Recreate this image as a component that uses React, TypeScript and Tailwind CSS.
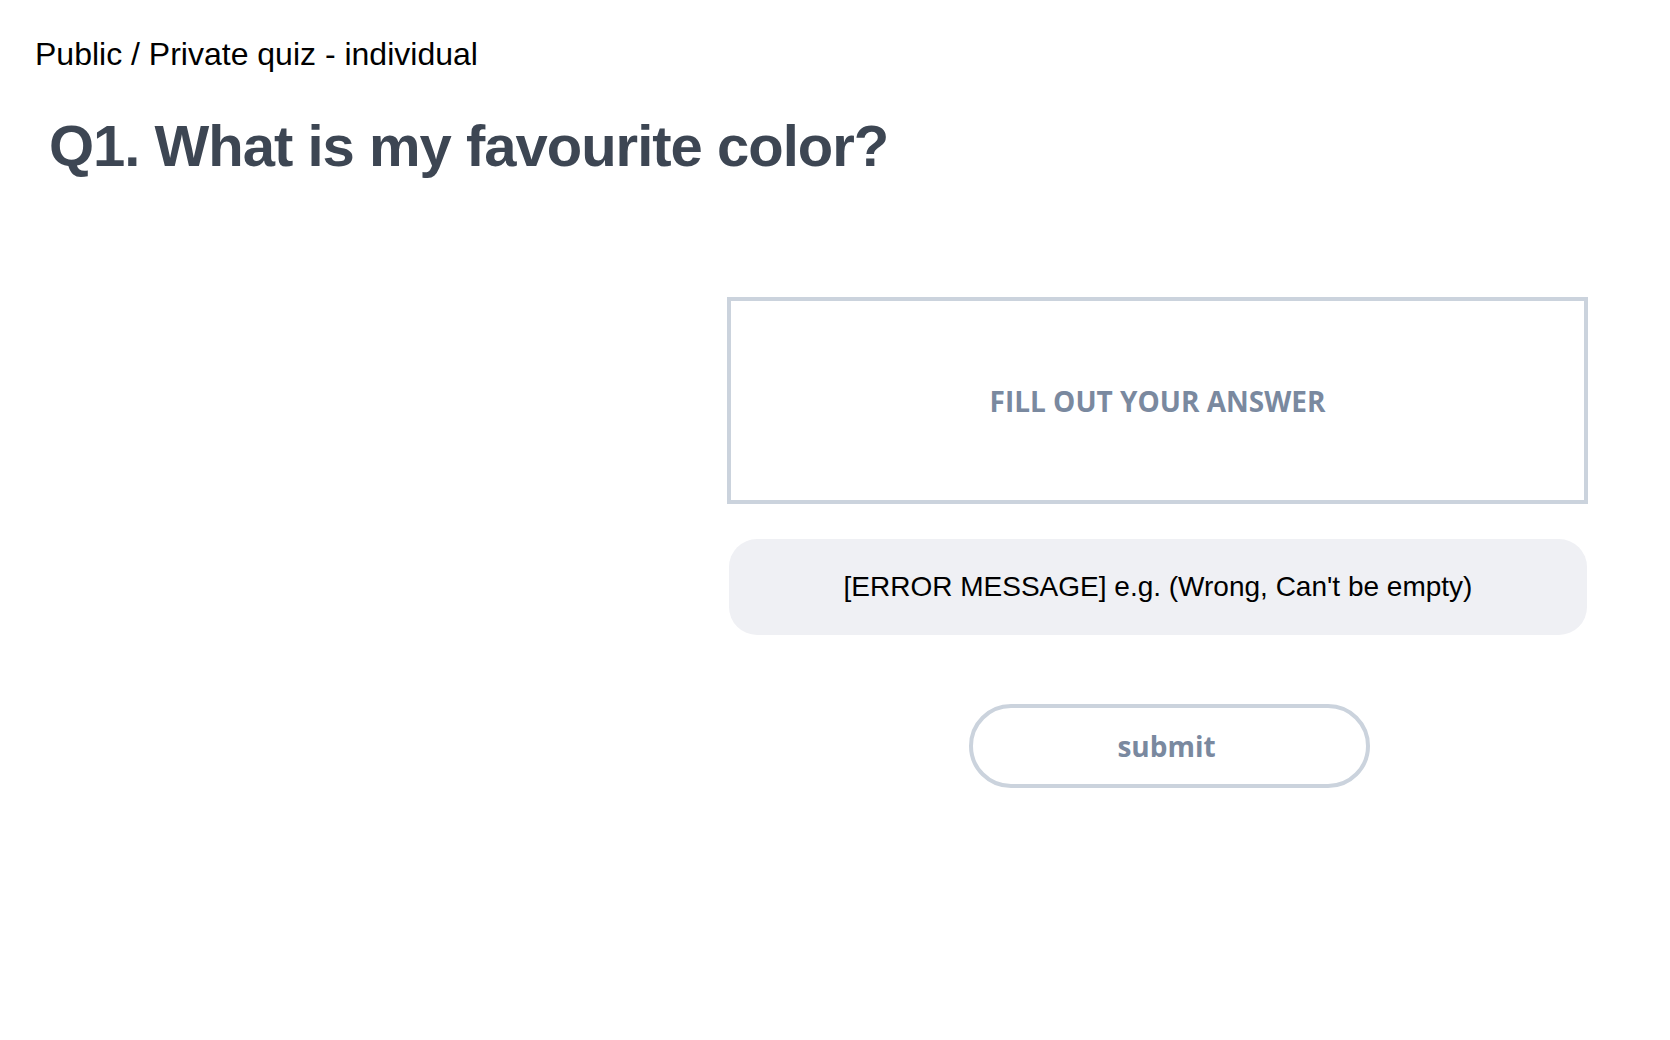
export default function App() {
  return (
    <div className="min-h-[1040px] w-[1670px] bg-white">
      <p className="ml-[35px] pt-[38px] font-['Liberation_Sans',Arial,sans-serif] text-[32px] leading-[32px] text-black">
        Public / Private quiz - individual
      </p>

      <h1 className="ml-[49px] mt-[46px] font-['Liberation_Sans',Arial,sans-serif] text-[58px] font-bold leading-[60px] tracking-[-1px] text-[#3d4653]">
        Q1. What is my favourite color?
      </h1>

      <div className="mt-[121px] flex">
        <div className="w-[727px] shrink-0" />
        <div className="w-[861px]">
          <div className="flex h-[207px] items-center justify-center border-4 border-[#cbd3dd] bg-white">
            <span className="font-['Open_Sans',sans-serif] text-[28px] font-bold text-[#7a899f]">
              FILL OUT YOUR ANSWER
            </span>
          </div>

          <div className="ml-[2px] mt-[35px] flex h-[96px] w-[858px] items-center justify-center rounded-[28px] bg-[#eff0f4]">
            <span className="font-['Liberation_Sans',Arial,sans-serif] text-[28px] text-black">
              [ERROR MESSAGE] e.g. (Wrong, Can't be empty)
            </span>
          </div>

          <button
            type="button"
            className="ml-[242px] mt-[69px] flex h-[84px] w-[401px] items-center justify-center rounded-full border-4 border-[#cbd3dd] bg-white pr-[6px]"
          >
            <span className="font-['Open_Sans',sans-serif] text-[28px] font-bold text-[#7a899f]">
              submit
            </span>
          </button>
        </div>
      </div>
    </div>
  );
}
